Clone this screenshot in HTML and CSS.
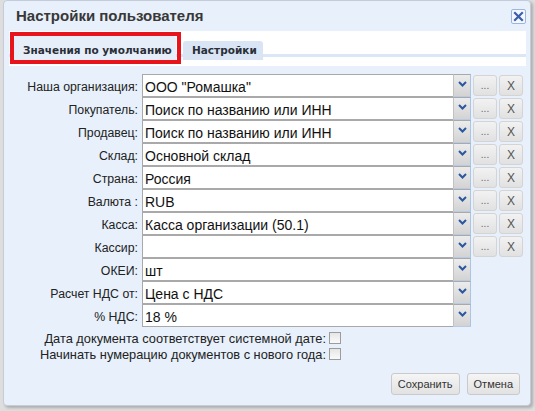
FILE: index.html
```html
<!DOCTYPE html>
<html lang="ru">
<head>
<meta charset="utf-8">
<title>Настройки пользователя</title>
<link rel="stylesheet" href="styles.css">
</head>
<body>
<div class="dialog">
  <div class="header">
    <span class="title">Настройки пользователя</span>
    <span class="close"><svg width="11" height="11" viewBox="0 0 11 11"><path d="M2 2 L9 9 M9 2 L2 9" stroke="#3d5ea8" stroke-width="2.2" stroke-linecap="square"/></svg></span>
  </div>
  <div class="tabpanel">
    <div class="tabstrip">
      <div class="tab tab-active">Значения по умолчанию</div>
      <div class="tab tab-inactive">Настройки</div>
    </div>
    <div class="highlight"></div>
  </div>
  <div class="form">
    <div class="row">
      <label class="lbl">Наша организация:</label>
      <div class="combo"><div class="field">ООО "Ромашка"</div><div class="trigger"><svg width="9" height="6" viewBox="0 0 9 6"><polyline points="1,1 4.5,4.5 8,1" fill="none" stroke="#2b579f" stroke-width="2"/></svg></div></div>
      <div class="btn-small dots">...</div><div class="btn-small">X</div>
    </div>
    <div class="row">
      <label class="lbl">Покупатель:</label>
      <div class="combo"><div class="field">Поиск по названию или ИНН</div><div class="trigger"><svg width="9" height="6" viewBox="0 0 9 6"><polyline points="1,1 4.5,4.5 8,1" fill="none" stroke="#2b579f" stroke-width="2"/></svg></div></div>
      <div class="btn-small dots">...</div><div class="btn-small">X</div>
    </div>
    <div class="row">
      <label class="lbl">Продавец:</label>
      <div class="combo"><div class="field">Поиск по названию или ИНН</div><div class="trigger"><svg width="9" height="6" viewBox="0 0 9 6"><polyline points="1,1 4.5,4.5 8,1" fill="none" stroke="#2b579f" stroke-width="2"/></svg></div></div>
      <div class="btn-small dots">...</div><div class="btn-small">X</div>
    </div>
    <div class="row">
      <label class="lbl">Склад:</label>
      <div class="combo"><div class="field">Основной склад</div><div class="trigger"><svg width="9" height="6" viewBox="0 0 9 6"><polyline points="1,1 4.5,4.5 8,1" fill="none" stroke="#2b579f" stroke-width="2"/></svg></div></div>
      <div class="btn-small dots">...</div><div class="btn-small">X</div>
    </div>
    <div class="row">
      <label class="lbl">Страна:</label>
      <div class="combo"><div class="field">Россия</div><div class="trigger"><svg width="9" height="6" viewBox="0 0 9 6"><polyline points="1,1 4.5,4.5 8,1" fill="none" stroke="#2b579f" stroke-width="2"/></svg></div></div>
      <div class="btn-small dots">...</div><div class="btn-small">X</div>
    </div>
    <div class="row">
      <label class="lbl">Валюта :</label>
      <div class="combo"><div class="field">RUB</div><div class="trigger"><svg width="9" height="6" viewBox="0 0 9 6"><polyline points="1,1 4.5,4.5 8,1" fill="none" stroke="#2b579f" stroke-width="2"/></svg></div></div>
      <div class="btn-small dots">...</div><div class="btn-small">X</div>
    </div>
    <div class="row">
      <label class="lbl">Касса:</label>
      <div class="combo"><div class="field">Касса организации (50.1)</div><div class="trigger"><svg width="9" height="6" viewBox="0 0 9 6"><polyline points="1,1 4.5,4.5 8,1" fill="none" stroke="#2b579f" stroke-width="2"/></svg></div></div>
      <div class="btn-small dots">...</div><div class="btn-small">X</div>
    </div>
    <div class="row">
      <label class="lbl">Кассир:</label>
      <div class="combo"><div class="field"></div><div class="trigger"><svg width="9" height="6" viewBox="0 0 9 6"><polyline points="1,1 4.5,4.5 8,1" fill="none" stroke="#2b579f" stroke-width="2"/></svg></div></div>
      <div class="btn-small dots">...</div><div class="btn-small">X</div>
    </div>
    <div class="row">
      <label class="lbl">ОКЕИ:</label>
      <div class="combo"><div class="field">шт</div><div class="trigger"><svg width="9" height="6" viewBox="0 0 9 6"><polyline points="1,1 4.5,4.5 8,1" fill="none" stroke="#2b579f" stroke-width="2"/></svg></div></div>
    </div>
    <div class="row">
      <label class="lbl">Расчет НДС от:</label>
      <div class="combo"><div class="field">Цена с НДС</div><div class="trigger"><svg width="9" height="6" viewBox="0 0 9 6"><polyline points="1,1 4.5,4.5 8,1" fill="none" stroke="#2b579f" stroke-width="2"/></svg></div></div>
    </div>
    <div class="row">
      <label class="lbl">% НДС:</label>
      <div class="combo"><div class="field">18 %</div><div class="trigger"><svg width="9" height="6" viewBox="0 0 9 6"><polyline points="1,1 4.5,4.5 8,1" fill="none" stroke="#2b579f" stroke-width="2"/></svg></div></div>
    </div>
    <div class="checks">
      <div class="check-row"><span>Дата документа соответствует системной дате:</span><span class="checkbox"></span></div>
      <div class="check-row"><span>Начинать нумерацию документов с нового года:</span><span class="checkbox"></span></div>
    </div>
    <div class="buttons">
      <div class="btn">Сохранить</div>
      <div class="btn">Отмена</div>
    </div>
  </div>
</div>
</body>
</html>
```
FILE: styles.css
```css
html, body {
  margin: 0;
  padding: 0;
}
body {
  width: 535px;
  height: 411px;
  overflow: hidden;
  background: #dedede;
  font-family: "Liberation Sans", Arial, sans-serif;
  color: #222;
}
.dialog {
  box-sizing: border-box;
  margin-left: 3px;
  width: 528px;
  height: 406px;
  background: #e7f0fb;
  border: 1px solid #c3ccd8;
  border-radius: 4px;
  box-shadow: 2px 2px 3px rgba(0, 0, 0, 0.22);
  display: flex;
  flex-direction: column;
}
.header {
  height: 30px;
  display: flex;
  align-items: center;
  justify-content: space-between;
  padding: 0 4px 2px 12px;
  box-sizing: border-box;
}
.title {
  font-size: 15px;
  font-weight: bold;
  color: #383838;
}
.close {
  width: 15px;
  height: 15px;
  box-sizing: border-box;
  border: 1px solid #9bb6dc;
  border-radius: 2px;
  background: #f3f8fe;
  display: flex;
  align-items: center;
  justify-content: center;
  margin-top: 2px;
}
.tabpanel {
  position: relative;
  height: 35px;
  margin: 0 4px 0 5px;
  background: #fff;
}
.tabstrip {
  display: flex;
  align-items: flex-start;
  height: 35px;
  padding-left: 5px;
  background: linear-gradient(to bottom, transparent 23px, #dce7f6 23px, #dce7f6 26px, transparent 26px);
}
.tab {
  box-sizing: border-box;
  font-family: "DejaVu Sans", Tahoma, sans-serif;
  font-weight: bold;
  font-size: 10.5px;
  line-height: 13px;
  color: #2a2f38;
  padding-left: 9px;
  border-radius: 3px 3px 0 0;
}
.tab-active {
  margin-top: 5px;
  width: 162px;
  height: 24px;
  padding-top: 8px;
  background: #e6eef9;
}
.tab-inactive {
  margin-top: 10px;
  margin-left: 7px;
  width: 80px;
  height: 19px;
  padding-top: 3px;
  background: #d9e5f5;
}
.highlight {
  position: absolute;
  left: 1px;
  top: 1px;
  width: 171px;
  height: 32px;
  box-sizing: border-box;
  border: 4px solid #e8141c;
}
.form {
  margin-top: 8px;
  display: flex;
  flex-direction: column;
}
.row {
  display: flex;
  align-items: center;
  height: 23px;
}
.lbl {
  width: 134px;
  text-align: right;
  font-size: 12.3px;
  color: #222;
  margin-right: 4px;
  padding-top: 3px;
  white-space: nowrap;
}
.combo {
  display: flex;
  width: 329px;
  height: 23px;
}
.field {
  box-sizing: border-box;
  flex: 1;
  height: 23px;
  border: 1px solid #a9a9a9;
  border-right: none;
  background: #fff;
  font-size: 14px;
  line-height: 22px;
  padding: 1px 0 0 2px;
  color: #111;
  white-space: nowrap;
}
.trigger {
  box-sizing: border-box;
  width: 18px;
  height: 23px;
  background: linear-gradient(#ececec, #d3d3d3);
  border-top: 1px solid #a9a9a9;
  border-right: 1px solid #aac4e6;
  border-bottom: 1px solid #b7cbe6;
  border-left: 1px solid #c2c2c2;
  display: flex;
  justify-content: center;
  align-items: flex-start;
  padding-top: 6px;
}
.btn-small {
  box-sizing: border-box;
  width: 24px;
  height: 21px;
  margin-left: 2px;
  border: 1px solid #d4d4d4;
  border-radius: 3px;
  background: linear-gradient(#f2f2f2, #e1e1e1);
  font-size: 12px;
  color: #555;
  display: flex;
  align-items: center;
  justify-content: center;
}
.dots {
  font-size: 10px;
  color: #666;
  align-items: flex-end;
  padding-bottom: 4px;
}
.checks {
  margin-top: 3px;
  display: flex;
  flex-direction: column;
  width: 337px;
}
.check-row {
  height: 16px;
  display: flex;
  align-items: center;
  justify-content: flex-end;
  font-size: 12.8px;
  color: #222;
  white-space: nowrap;
}
.checkbox {
  box-sizing: border-box;
  width: 12px;
  height: 12px;
  margin-left: 3px;
  border: 1px solid #9c9c9c;
  background: linear-gradient(#e6e6e6, #fafafa);
}
.buttons {
  margin-top: 11px;
  display: flex;
  justify-content: flex-end;
  gap: 7px;
  padding-right: 10px;
}
.btn {
  box-sizing: border-box;
  height: 22px;
  padding: 0 6px;
  border: 1px solid #cacaca;
  border-radius: 3px;
  background: linear-gradient(#f5f5f5, #e2e2e2);
  font-size: 11px;
  color: #333;
  display: flex;
  align-items: center;
}
```
